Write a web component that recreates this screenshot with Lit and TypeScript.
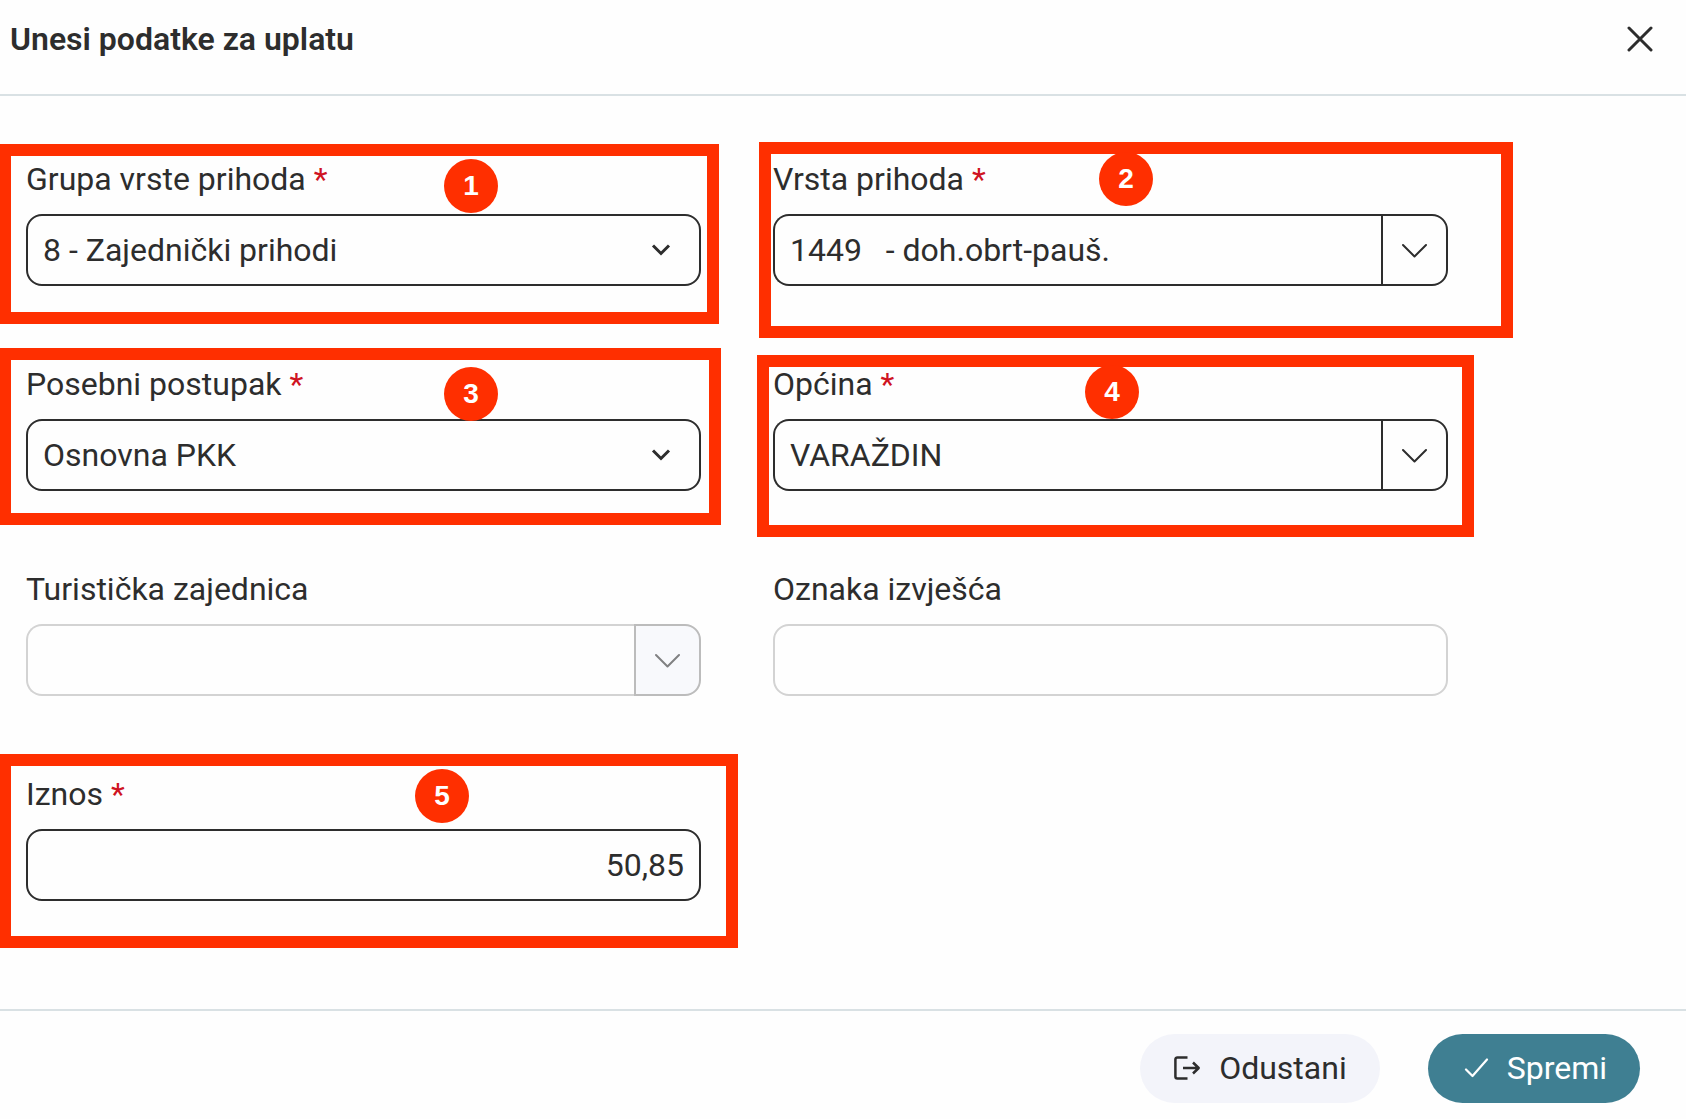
import { LitElement, css, html, nothing, svg } from "lit";
import type { TemplateResult } from "lit";
import { customElement } from "lit/decorators.js";

type FieldKind = "select" | "combo" | "text" | "amount";

interface Field {
  id: string;
  label: string;
  kind: FieldKind;
  value: string;
  required: boolean;
  step?: number;
}

const FIELDS: Field[] = [
  { id: "grupa", label: "Grupa vrste prihoda", kind: "select", value: "8 - Zajednički prihodi", required: true, step: 1 },
  { id: "vrsta", label: "Vrsta prihoda", kind: "combo", value: "1449   - doh.obrt-pauš.", required: true, step: 2 },
  { id: "postupak", label: "Posebni postupak", kind: "select", value: "Osnovna PKK", required: true, step: 3 },
  { id: "opcina", label: "Općina", kind: "combo", value: "VARAŽDIN", required: true, step: 4 },
  { id: "turisticka", label: "Turistička zajednica", kind: "combo", value: "", required: false },
  { id: "oznaka", label: "Oznaka izvješća", kind: "text", value: "", required: false },
  { id: "iznos", label: "Iznos", kind: "amount", value: "50,85", required: true, step: 5 },
];

const icon = (name: string, width: number, height: number, shape: unknown) => html`
  <svg class="icon ${name}" width=${width} height=${height} viewBox="0 0 ${width} ${height}" aria-hidden="true">
    ${shape}
  </svg>
`;

const closeIcon = icon("icon-close", 26, 26, svg`<path d="M2 2 24 24M24 2 2 24" />`);
const selectIcon = icon("icon-select", 20, 14, svg`<path d="M2 2.5 10 10.5 18 2.5" />`);
const comboIcon = icon("icon-combo", 26, 16, svg`<path d="M1 3 12.5 14.5 24 3" />`);
const exitIcon = icon(
  "icon-exit",
  28,
  26,
  svg`<path d="M14.5 2.4H4.4a2 2 0 0 0-2 2v17.2a2 2 0 0 0 2 2h10.1M10 13h15.5M20 7.5l5.7 5.5-5.7 5.5" />`,
);
const checkIcon = icon("icon-check", 28, 20, svg`<path d="M5 11.5 11.5 18 26 1.5" />`);

@customElement("app-root")
export class AppRoot extends LitElement {
  static styles = css`
    :host {
      --ink: #2d2d2d;
      --surface: #fefefe;
      --rule: #d9e1e4;
      --mark: #ff2f00;
      display: block;
      color: var(--ink);
      background: var(--surface);
      font-family: Roboto, "Liberation Sans", sans-serif;
      font-size: 32px;
      line-height: 40px;
    }

    *,
    *::before,
    *::after {
      box-sizing: border-box;
    }

    .dialog {
      display: flex;
      flex-direction: column;
      min-height: 100vh;
      overflow: hidden;
    }

    .header {
      display: flex;
      align-items: flex-start;
      justify-content: space-between;
      padding: 19px 26px 35px 10px;
      border-bottom: 2px solid var(--rule);
    }

    .title {
      margin: 0;
      font-size: 32px;
      font-weight: 600;
    }

    .close {
      display: grid;
      place-items: center;
      width: 40px;
      height: 40px;
      padding: 0;
      border: 0;
      background: none;
      color: inherit;
    }

    .icon {
      display: block;
      fill: none;
      stroke: currentColor;
      stroke-linecap: round;
      stroke-linejoin: round;
      stroke-width: 2;
    }

    .icon-close {
      stroke-width: 3;
    }

    .icon-select {
      stroke-width: 3;
      stroke-linecap: butt;
      stroke-linejoin: miter;
    }

    .icon-exit {
      stroke-width: 2.5;
      stroke-linecap: butt;
    }

    .icon-check {
      stroke-width: 2.2;
    }

    .form {
      flex: 1;
      display: grid;
      grid-template-columns: repeat(2, minmax(0, 1fr));
      align-content: start;
      gap: 78px 72px;
      padding: 63px 238px 63px 26px;
    }

    .field {
      position: relative;
      display: flex;
      flex-direction: column;
      gap: 15px;
    }

    .required {
      color: #cf1322;
    }

    .control {
      width: 100%;
      min-width: 0;
      height: 72px;
      margin: 0;
      padding: 0 15px;
      border: 2px solid #d3d3d3;
      border-radius: 16px;
      background: var(--surface);
      color: inherit;
      font: inherit;
      appearance: none;
      outline: none;
    }

    .is-required .control,
    .is-required .toggle {
      border-color: var(--ink);
    }

    .amount {
      text-align: right;
    }

    .select-box {
      display: grid;
      align-items: center;
    }

    .select-box > * {
      grid-area: 1 / 1;
    }

    .select-box .icon {
      justify-self: end;
      margin-right: 30px;
      pointer-events: none;
    }

    .combo-box {
      display: flex;
    }

    .combo-box .control {
      border-right: 0;
      border-radius: 16px 0 0 16px;
    }

    .toggle {
      flex: none;
      display: grid;
      place-items: center;
      width: 67px;
      height: 72px;
      padding: 0;
      border: 2px solid #bcbcbc;
      border-radius: 0 16px 16px 0;
      background: #f8f9fc;
      color: #818182;
    }

    .is-required .toggle {
      background: var(--surface);
      color: inherit;
    }

    /* Instruction overlay: a frame round the field and its numbered badge. */
    .frame,
    .badge {
      position: absolute;
      pointer-events: none;
    }

    .frame {
      border: 12px solid var(--mark);
    }

    .badge {
      display: grid;
      place-items: center;
      width: 54px;
      height: 54px;
      border-radius: 50%;
      background: var(--mark);
      color: #fff;
      font: bold 28px / 32px "Liberation Sans", Arial, sans-serif;
    }

    .frame-1 { inset: -15px -18px -38px -27px; }
    .badge-1 { top: 0; left: 418px; }
    .frame-2 { inset: -17px -65px -52px -14px; }
    .badge-2 { top: -7px; left: 326px; }
    .frame-3 { inset: -16px -20px -34px -27px; }
    .badge-3 { top: 3px; left: 418px; }
    .frame-4 { inset: -9px -26px -46px -16px; }
    .badge-4 { top: 1px; left: 312px; }
    .frame-5 { inset: -20px -37px -47px -27px; }
    .badge-5 { top: -5px; left: 389px; }

    .footer {
      display: flex;
      justify-content: flex-end;
      gap: 48px;
      padding: 23px 46px 16px;
      border-top: 2px solid var(--rule);
    }

    .action {
      display: flex;
      align-items: center;
      gap: 18px;
      height: 69px;
      padding: 0 33px 2px;
      border: 0;
      border-radius: 35px;
      background: #f3f4fa;
      color: var(--ink);
      font: inherit;
    }

    .action-primary {
      background: #3f7f92;
      color: #fff;
    }
  `;

  private renderControl(field: Field): TemplateResult {
    switch (field.kind) {
      case "select":
        return html`
          <div class="select-box">
            <select class="control" id=${field.id} ?required=${field.required}>
              <option selected>${field.value}</option>
            </select>
            ${selectIcon}
          </div>
        `;
      case "combo":
        return html`
          <div class="combo-box">
            <input class="control" type="text" id=${field.id} .value=${field.value} ?required=${field.required} />
            <button class="toggle" type="button" aria-label=${field.label}>${comboIcon}</button>
          </div>
        `;
      case "amount":
        return html`
          <input
            class="control amount"
            type="text"
            inputmode="decimal"
            id=${field.id}
            .value=${field.value}
            ?required=${field.required}
          />
        `;
      default:
        return html`<input class="control" type="text" id=${field.id} .value=${field.value} />`;
    }
  }

  private renderField(field: Field): TemplateResult {
    return html`
      <div class="field ${field.required ? "is-required" : ""}">
        <label for=${field.id}>${field.label}${field.required ? html` <span class="required">*</span>` : nothing}</label>
        ${this.renderControl(field)}
        ${field.step
          ? html`
              <div class="frame frame-${field.step}"></div>
              <div class="badge badge-${field.step}">${field.step}</div>
            `
          : nothing}
      </div>
    `;
  }

  render() {
    return html`
      <section class="dialog" role="dialog" aria-labelledby="title">
        <header class="header">
          <h1 class="title" id="title">Unesi podatke za uplatu</h1>
          <button class="close" type="button" aria-label="Zatvori">${closeIcon}</button>
        </header>
        <form class="form">${FIELDS.map((field) => this.renderField(field))}</form>
        <footer class="footer">
          <button class="action" type="button">${exitIcon}<span>Odustani</span></button>
          <button class="action action-primary" type="button">${checkIcon}<span>Spremi</span></button>
        </footer>
      </section>
    `;
  }
}
